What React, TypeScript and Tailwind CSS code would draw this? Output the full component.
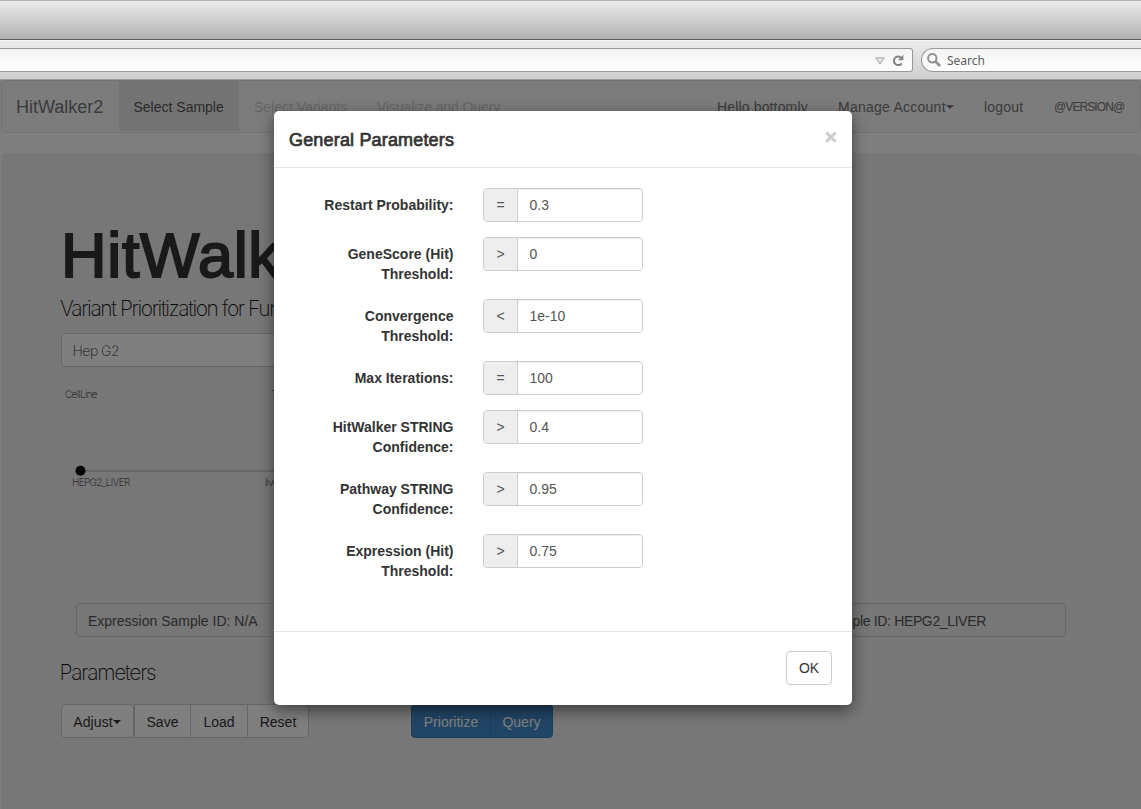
import React from "react";

type Param = { label: string[]; op: string; value: string };

const params: Param[] = [
  { label: ["Restart Probability:"], op: "=", value: "0.3" },
  { label: ["GeneScore (Hit)", "Threshold:"], op: ">", value: "0" },
  { label: ["Convergence", "Threshold:"], op: "<", value: "1e-10" },
  { label: ["Max Iterations:"], op: "=", value: "100" },
  { label: ["HitWalker STRING", "Confidence:"], op: ">", value: "0.4" },
  { label: ["Pathway STRING", "Confidence:"], op: ">", value: "0.95" },
  { label: ["Expression (Hit)", "Threshold:"], op: ">", value: "0.75" },
];

const Caret = () => (
  <svg width="8" height="4" viewBox="0 0 8 4" className="shrink-0 fill-current">
    <path d="M0 0h8L4 4z" />
  </svg>
);

function BrowserChrome() {
  return (
    <header className="flex h-20 shrink-0 flex-col">
      <div className="h-10 border-t border-b border-t-[#b4b4b4] border-b-[#5f5f5f] bg-linear-to-b from-[#ebebeb] to-[#b2b2b2]" />
      <div className="flex h-10 items-start gap-2 border-t border-b border-t-[#f5f5f5] border-b-[#9a9a9a] bg-linear-to-b from-[#ececec] to-[#cfcfcf] pt-[7px]">
        <div className="flex h-6 w-[913px] items-center justify-end gap-[7px] rounded-r-[3px] border border-l-0 border-[#979997] bg-linear-to-b from-[#f4f4f4] to-white pr-2">
          <svg width="10" height="8" viewBox="0 0 10 8" className="mt-px">
            <path d="M.8.8h8.400L5 7.200z" fill="#e2e2e2" stroke="#a8a8a8" />
          </svg>
          <svg width="12" height="13" viewBox="0 0 12 13" className="mt-px">
            <path d="M9.700 9.300A4.300 4.300 0 1 1 8.800 3.400" fill="none" stroke="#808080" strokeWidth="2" />
            <path d="M11.300.8v5.400H5.900z" fill="#808080" />
          </svg>
        </div>
        <div className="flex h-6 flex-1 items-center gap-[6px] rounded-l-full border border-r-0 border-[#979997] bg-linear-to-b from-[#f4f4f4] to-white pl-[5px]">
          <svg width="14" height="14" viewBox="0 0 14 14" fill="none" stroke="#909090">
            <circle cx="5.300" cy="5.300" r="4.200" strokeWidth="2" />
            <path d="M8.400 8.400l4.600 4.600" strokeWidth="2.600" />
          </svg>
          <span className="pt-[2px] font-['Noto_Sans',sans-serif] text-xs leading-none text-[#5c5c5c]">Search</span>
        </div>
      </div>
    </header>
  );
}

function Navbar() {
  return (
    <nav className="ml-px flex h-[53px] items-stretch rounded border border-[#e7e7e7] bg-[#f8f8f8] text-sm leading-5 whitespace-nowrap text-[#777]">
      <span className="w-[117px] pt-4 pl-[14px] text-lg leading-5">HitWalker2</span>
      <span className="h-[50px] w-[120px] bg-[#e7e7e7] pt-4 pl-[14.5px] text-[#555]">Select Sample</span>
      <span className="w-[123px] pt-4 pl-[15px] text-[#ccc]">Select Variants</span>
      <span className="pt-4 pl-[15px] tracking-[-0.1px] text-[#ccc]">Visualize and Query</span>
      <div className="ml-auto flex pt-4">
        <span className="w-[121px] tracking-[0.15px]">Hello bottomly</span>
        <span className="flex h-5 w-[146px] items-center tracking-[0.25px]">Manage Account<Caret /></span>
        <span className="w-[70px] tracking-[0.2px]">logout</span>
        <span className="w-[86px] text-xs leading-[21px] tracking-[-0.9px]">@VERSION@</span>
      </div>
    </nav>
  );
}

function Page() {
  return (
    <div className="flex h-full flex-col bg-white">
      <Navbar />
      <section className="mt-5 ml-px flex flex-1 flex-col rounded-t-md bg-[#eee] pr-[60px] pl-[60px]">
        <h1 className="mt-[67px] text-[63px] leading-[70px] tracking-[0.7px] text-[#333] [-webkit-text-stroke:2px_#333]">HitWalker2</h1>
        <p className="mt-[7px] -ml-px font-['Inter',sans-serif] text-[21px] leading-6 font-extralight tracking-[-1.4px] text-[#111]">
          Variant Prioritization for Functional
        </p>
        <div className="mt-[12px] flex h-[34px] w-[600px] items-center rounded border border-[#ccc] bg-white pt-[2px] pl-[10.5px] font-['Inter',sans-serif] text-sm font-extralight tracking-[-0.5px] text-[#333]">
          Hep G2
        </div>
        <svg width="600" height="110" className="mt-[19px] shrink-0 font-['Inter',sans-serif] text-[10px] font-extralight tracking-[-0.65px]">
          <text x="4" y="12" fill="#222">CellLine</text>
          <text x="210" y="12" fill="#222">Tissue</text>
          <path d="M20 85h400" stroke="#ccc" strokeWidth="2" />
          <circle cx="19.500" cy="84.800" r="5" />
          <text x="11" y="100" fill="#222">HEPG2_LIVER</text>
          <text x="204" y="100" fill="#222">liver</text>
        </svg>
        <div className="mt-[107px] flex justify-between px-[15px] text-sm text-[#555]">
          <div className="flex h-[34px] w-[306px] items-center rounded border border-[#ccc] bg-[#eee] pt-[2px] pl-[11px]">Expression Sample ID: N/A</div>
          <div className="flex h-[34px] w-[306px] items-center justify-end rounded border border-[#ccc] bg-[#eee] pt-[2px] pr-[79px] tracking-[-0.35px]">Sample ID: HEPG2_LIVER</div>
        </div>
        <p className="mt-[24px] -ml-[1.5px] font-['Inter',sans-serif] text-[21px] leading-6 font-extralight tracking-[-1.25px] text-[#111]">Parameters</p>
        <div className="mt-[19px] flex text-sm text-[#333]">
          <span className="flex h-[34px] w-[73px] items-center justify-center rounded border border-[#ccc] bg-white pt-[2px] pr-px tracking-[0.1px]">Adjust<Caret /></span>
          <span className="flex h-[34px] w-[57px] items-center justify-center border border-[#ccc] bg-white pt-[2px]">Save</span>
          <span className="-ml-px flex h-[34px] w-[58px] items-center justify-center border border-[#ccc] bg-white pt-[2px]">Load</span>
          <span className="-ml-px flex h-[34px] w-[62px] items-center justify-center rounded-r border border-[#ccc] bg-white pt-[2px]">Reset</span>
          <span className="ml-[102px] flex h-[34px] w-[80px] items-center justify-center rounded-l border border-[#357ebd] bg-[#428bca] pt-[2px] text-white">Prioritize</span>
          <span className="-ml-px flex h-[34px] w-[63px] items-center justify-center rounded-r border border-[#357ebd] bg-[#428bca] pt-[2px] text-white">Query</span>
        </div>
      </section>
    </div>
  );
}

function ParameterRow({ label, op, value }: Param) {
  return (
    <div className="flex items-start">
      <div className="w-[179.5px] pt-[7px] text-right text-sm leading-5 font-bold text-[#333]">
        {label.map((line) => (
          <div key={line}>{line}</div>
        ))}
      </div>
      <div className="ml-[29.5px] flex h-[34px] w-40 rounded border border-[#ccc] text-sm text-[#555]">
        <span className="flex w-[34px] items-center justify-center rounded-l-[3px] border-r border-[#ccc] bg-[#eee]">{op}</span>
        <span className="flex flex-1 items-center rounded-r-[3px] bg-white pl-[11.5px] shadow-[inset_0_1px_1px_rgba(0,0,0,0.075)]">{value}</span>
      </div>
    </div>
  );
}

function ParametersDialog() {
  return (
    <div role="dialog" className="flex h-[594px] w-[578px] flex-col rounded-[5px] bg-white shadow-[0_5px_15px_rgba(0,0,0,0.5)]">
      <div className="flex h-[57px] justify-between border-b border-[#e5e5e5] px-[15px]">
        <h2 className="pt-[19px] text-lg leading-5 tracking-[0.17px] text-[#333] [-webkit-text-stroke:0.7px_#333]">General Parameters</h2>
        <span className="pt-[15px] text-[21px] leading-[21px] font-bold text-[#ccc] [-webkit-text-stroke:0.5px_#ccc]">×</span>
      </div>
      <div className="flex flex-1 flex-col gap-[15px] pt-5">
        {params.map((p) => (
          <ParameterRow key={p.label.join(" ")} {...p} />
        ))}
      </div>
      <div className="flex h-[74px] items-start justify-end border-t border-[#e5e5e5] pt-[19px] pr-5">
        <button className="h-[34px] w-[46px] rounded border border-[#ccc] bg-white text-sm text-[#333]">OK</button>
      </div>
    </div>
  );
}

export default function App() {
  return (
    <div className="flex h-[809px] w-[1141px] flex-col overflow-hidden font-['Liberation_Sans',Arial,sans-serif]">
      <BrowserChrome />
      <main className="relative h-[729px] overflow-hidden">
        <Page />
        <div className="absolute inset-0 flex items-start bg-black/50 pt-[31px] pl-[274px]">
          <ParametersDialog />
        </div>
      </main>
    </div>
  );
}
